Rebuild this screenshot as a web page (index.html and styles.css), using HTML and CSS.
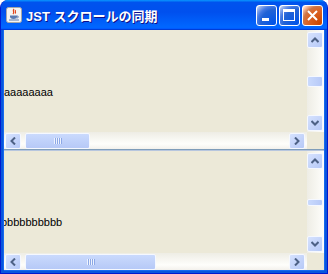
FILE: index.html
```html
<!DOCTYPE html>
<html lang="ja">
<head>
    <meta charset="UTF-8">
    <title>JST スクロールの同期</title>
    <link rel="stylesheet" href="styles.css">
</head>
<body>
    <div class="window">
        <!-- Title bar -->
        <div class="titlebar">
            <svg class="app-icon" width="16" height="16" viewBox="0 0 16 16">
                <rect x="0.5" y="0.5" width="15" height="15" rx="2" fill="#f4f4f2" stroke="#a7a7a7"/>
                <path d="M8 2 C6 4 9 5 7 7 M9.5 3 C8.5 4.5 10.5 5 9 6.5" stroke="#e0451b" stroke-width="1.2" fill="none"/>
                <path d="M4 8.5 H11 V9.5 C11 11 10 12 7.5 12 C5 12 4 11 4 9.5 Z" fill="#5a7ab0"/>
                <path d="M11 9 C13 9 13 11 10.5 11" stroke="#5a7ab0" fill="none"/>
                <rect x="3" y="12.5" width="10" height="1" fill="#5a7ab0"/>
            </svg>
            <span class="title">JST スクロールの同期</span>
            <div class="controls">
                <button class="ctl ctl-blue">
                    <svg width="19" height="19" viewBox="0 0 19 19"><rect x="5" y="12" width="7" height="3" fill="#fff"/></svg>
                </button>
                <button class="ctl ctl-blue">
                    <svg width="19" height="19" viewBox="0 0 19 19"><path d="M3 3h12v12H3z M4 6v8h10V6z" fill="#fff" fill-rule="evenodd"/></svg>
                </button>
                <button class="ctl ctl-close">
                    <svg width="19" height="19" viewBox="0 0 19 19"><path d="M5 5L14 14M14 5L5 14" stroke="#fff" stroke-width="2"/></svg>
                </button>
            </div>
        </div>

        <div class="content">
            <!-- upper scroll pane -->
            <div class="pane">
                <div class="pane-main">
                    <div class="viewport view-a"><span>aaaaaaaa</span></div>
                    <div class="vbar">
                        <div class="sbtn up"><svg width="8" height="8" viewBox="0 0 8 8"><polyline points="0.5,6 4,2.5 7.5,6" class="arrow"/></svg></div>
                        <div class="vtrack"><div class="vthumb" style="margin-top:28px;height:11px"></div></div>
                        <div class="sbtn down"><svg width="8" height="8" viewBox="0 0 8 8"><polyline points="0.5,2 4,5.5 7.5,2" class="arrow"/></svg></div>
                    </div>
                </div>
                <div class="pane-foot">
                    <div class="hbar">
                        <div class="sbtn left"><svg width="8" height="8" viewBox="0 0 8 8"><polyline points="6,0.5 2.5,4 6,7.5" class="arrow"/></svg></div>
                        <div class="htrack"><div class="hthumb" style="margin-left:4px;width:65px"><span class="grip"></span></div></div>
                        <div class="sbtn right"><svg width="8" height="8" viewBox="0 0 8 8"><polyline points="2,0.5 5.5,4 2,7.5" class="arrow"/></svg></div>
                    </div>
                    <div class="corner"></div>
                </div>
            </div>

            <div class="divider"></div>

            <!-- lower scroll pane -->
            <div class="pane">
                <div class="pane-main">
                    <div class="viewport view-b"><span>bbbbbbbbbb</span></div>
                    <div class="vbar">
                        <div class="sbtn up"><svg width="8" height="8" viewBox="0 0 8 8"><polyline points="0.5,6 4,2.5 7.5,6" class="arrow"/></svg></div>
                        <div class="vtrack"><div class="vthumb" style="margin-top:30px;height:7px"></div></div>
                        <div class="sbtn down"><svg width="8" height="8" viewBox="0 0 8 8"><polyline points="0.5,2 4,5.5 7.5,2" class="arrow"/></svg></div>
                    </div>
                </div>
                <div class="pane-foot">
                    <div class="hbar">
                        <div class="sbtn left"><svg width="8" height="8" viewBox="0 0 8 8"><polyline points="6,0.5 2.5,4 6,7.5" class="arrow"/></svg></div>
                        <div class="htrack"><div class="hthumb" style="margin-left:4px;width:131px"><span class="grip"></span></div></div>
                        <div class="sbtn right"><svg width="8" height="8" viewBox="0 0 8 8"><polyline points="2,0.5 5.5,4 2,7.5" class="arrow"/></svg></div>
                    </div>
                    <div class="corner"></div>
                </div>
            </div>
        </div>
    </div>
</body>
</html>
```

FILE: styles.css
```css
* {
    margin: 0;
    padding: 0;
    box-sizing: border-box;
}

body {
    background: #ffffff;
    font-family: 'Liberation Sans', 'Noto Sans CJK JP', sans-serif;
}

.window {
    width: 328px;
    height: 274px;
    background: #0855dd;
    border: 1px solid #0019cf;
    border-top: none;
    border-radius: 8px 8px 0 0;
    overflow: hidden;
    display: flex;
    flex-direction: column;
}

/* title bar */
.titlebar {
    height: 30px;
    margin: 0 -1px;
    display: flex;
    align-items: center;
    padding: 0 5px 0 6px;
    background: linear-gradient(180deg, #0997ff, #0053ee 8%, #0050ee 40%, #06f 88%, #06f 93%, #005bff 95%, #003dd7 96%, #003dd7);
}

.app-icon {
    flex: none;
    margin-top: -1px;
}

.title {
    margin-left: 4px;
    color: #fff;
    font-size: 13px;
    font-weight: bold;
    text-shadow: 1px 1px #0f1089;
    white-space: nowrap;
}

.controls {
    margin-left: auto;
    display: flex;
    gap: 2px;
}

.ctl {
    width: 21px;
    height: 21px;
    border: 1px solid #fff;
    border-radius: 3px;
    display: flex;
    align-items: center;
    justify-content: center;
}

.ctl-blue {
    background: radial-gradient(circle at 90% 90%, #0054e9 0%, #2263d5 55%, #4479e4 70%, #a3bbec 90%, #fff 100%);
}

.ctl-close {
    background: radial-gradient(circle at 90% 90%, #cc4600 0%, #dc6527 55%, #cd7546 70%, #ffccb2 90%, #fff 100%);
}

/* client area */
.content {
    flex: 1;
    margin: 0 3px 3px;
    background: #ece9d8;
    display: flex;
    flex-direction: column;
    box-shadow: -1px 0 #166aee, 1px 0 #166aee, 0 1px #166aee;
}

.pane {
    height: 119px;
    display: flex;
    flex-direction: column;
}

.pane-main {
    flex: 1;
    display: flex;
    min-height: 0;
}

.viewport {
    flex: 1;
    overflow: hidden;
    white-space: nowrap;
    font-size: 11px;
    line-height: 13px;
    color: #000;
}

.view-a {
    padding-top: 56px;
}

.view-b {
    padding-top: 65px;
}

.view-b span {
    display: inline-block;
    margin-left: -3px;
}

.divider {
    height: 2px;
    border-top: 1px solid #7f9db9;
    background: #b7c6de;
}

/* scroll bars */
.vbar {
    width: 17px;
    display: flex;
    flex-direction: column;
    background: linear-gradient(to right, #eeede5, #fefefb);
}

.vbar .sbtn {
    margin-right: 1px;
}

.vbar .up {
    margin-top: 2px;
}

.vbar .down {
    margin-bottom: 1px;
}

.vtrack {
    flex: 1;
    padding-right: 1px;
}

.pane-foot {
    height: 17px;
    display: flex;
}

.hbar {
    flex: 1;
    display: flex;
    padding-top: 1px;
    background: linear-gradient(to bottom, #eeede5, #fefefb 70%, #f3f1ec);
}

.hbar .left {
    margin-left: 1px;
}

.hbar .right {
    margin-right: 2px;
}

.htrack {
    flex: 1;
    display: flex;
}

.corner {
    width: 17px;
    background: #ece9d8;
}

.sbtn {
    width: 16px;
    height: 16px;
    flex: none;
    border: 1px solid #f5f8ff;
    border-radius: 2px;
    background: linear-gradient(135deg, #d6e2fe, #b6c9f7);
    display: flex;
    align-items: center;
    justify-content: center;
}

.arrow {
    fill: none;
    stroke: #4d6185;
    stroke-width: 2;
}

.vthumb,
.hthumb {
    border: 1px solid #f5f8ff;
    border-radius: 2px;
    display: flex;
    align-items: center;
    justify-content: center;
}

.vthumb {
    background: linear-gradient(to right, #cadafd, #b6c9f7);
}

.hthumb {
    height: 16px;
    background: linear-gradient(to bottom, #cadafd, #b6c9f7);
}

.grip {
    width: 8px;
    height: 6px;
    background: repeating-linear-gradient(to right, #eef3fe 0 1px, #8ca8e6 1px 2px);
}
```
